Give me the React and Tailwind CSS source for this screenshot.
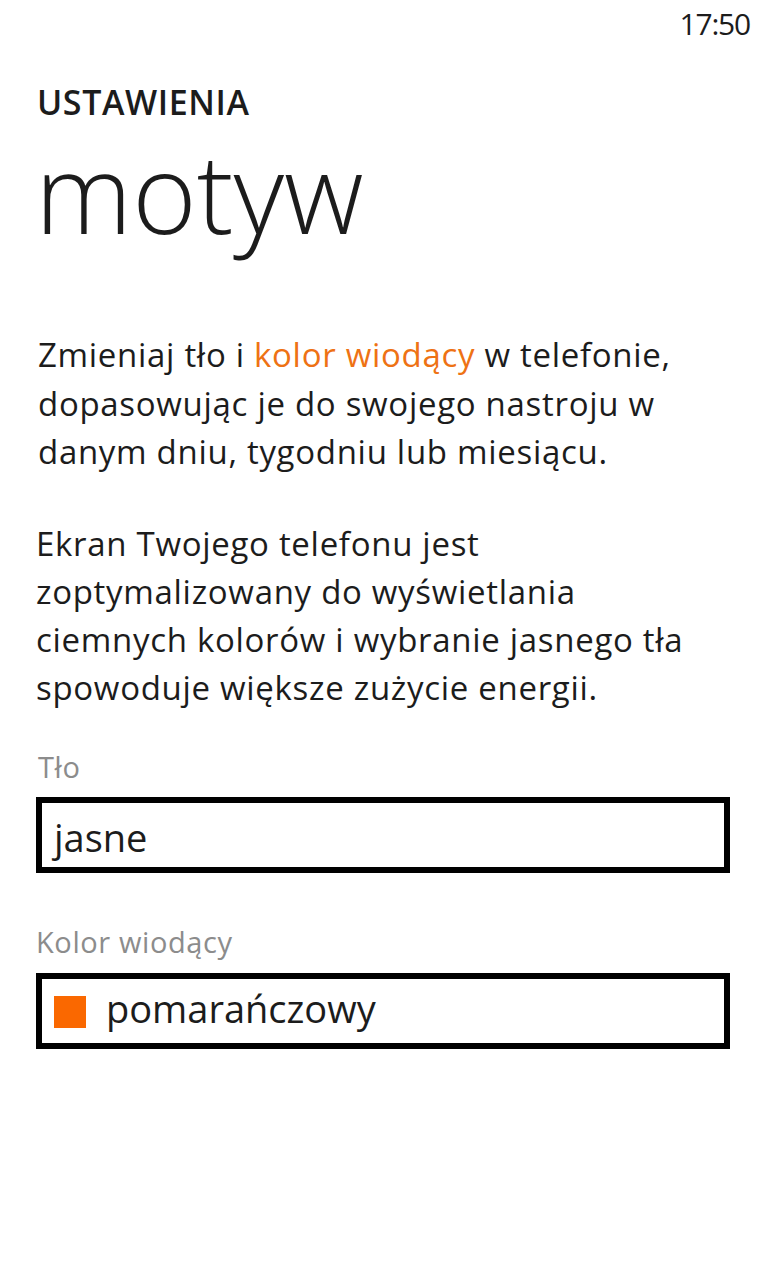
import React from "react";

const ACCENT = "text-[#ee7214]";

const App = () => {
  return (
    <div className="min-h-screen w-full bg-white text-[#1c1c1c] font-['Open_Sans','Noto_Sans',sans-serif]">
      {/* Status bar */}
      <div className="h-[50px] pt-[8px] pr-[18px] flex justify-end">
        <span className="text-[30px] leading-[31px] tracking-[-1.2px]">17:50</span>
      </div>

      {/* Title */}
      <div className="pl-[37px]">
        <div className="mt-[35px] text-[34px] leading-[34px] font-semibold tracking-[0.6px]">USTAWIENIA</div>
        <div className="mt-[17px] -ml-[2px] text-[110px] leading-[110px] font-light">motyw</div>
      </div>

      {/* Description */}
      <div className="pl-[38px] mt-[85px] text-[33px] leading-[48.5px] tracking-[0.7px] whitespace-nowrap">
        Zmieniaj tło i <span className={ACCENT}>kolor wiodący</span> w telefonie,
        <br />
        dopasowując je do swojego nastroju w
        <br />
        danym dniu, tygodniu lub miesiącu.
      </div>

      <div className="pl-[36px] mt-[43px] text-[33px] leading-[48px] tracking-[0.7px] whitespace-nowrap">
        Ekran Twojego telefonu jest
        <br />
        zoptymalizowany do wyświetlania
        <br />
        ciemnych kolorów i wybranie jasnego tła
        <br />
        spowoduje większe zużycie energii.
      </div>

      {/* Tło */}
      <div className="pl-[38px] mt-[37px] text-[29px] leading-[36px] tracking-[0.6px] text-[#8c8c8c]">Tło</div>
      <div className="mt-[12px] ml-[36px] w-[694px] h-[76px] border-[6px] border-black pl-[12px] pt-[15px]">
        <div className="text-[38px] leading-[38px]">jasne</div>
      </div>

      {/* Kolor wiodący */}
      <div className="pl-[36px] mt-[51px] text-[29px] leading-[36px] tracking-[0.6px] text-[#8c8c8c]">Kolor wiodący</div>
      <div className="mt-[13px] ml-[36px] w-[694px] h-[76px] border-[6px] border-black pl-[12px] flex items-start">
        <div className="mt-[17px] w-[32px] h-[32px] bg-[#fa6800] shrink-0" />
        <div className="ml-[20px] mt-[10px] text-[38px] leading-[38px]">pomarańczowy</div>
      </div>
    </div>
  );
};

export default App;
